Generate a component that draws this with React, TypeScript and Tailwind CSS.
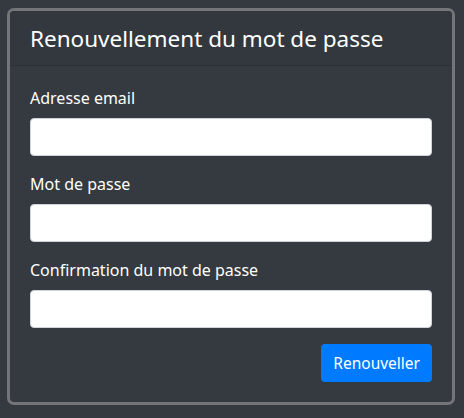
const fields = [
  { id: "email", label: "Adresse email", type: "email" },
  { id: "password", label: "Mot de passe", type: "password" },
  { id: "password_confirmation", label: "Confirmation du mot de passe", type: "password" },
];

export default function App() {
  return (
    <div className="min-h-screen bg-[#343a40] pt-[8px] pl-[7px] pr-[9px] pb-[12px] font-['Noto_Sans',sans-serif] text-white">
      <div className="rounded-[7px] border-[3px] border-[#747579] bg-[#343a40] overflow-hidden">
        <div className="flex h-[55px] items-center border-b border-[#2c3136] bg-[#32383e] px-5">
          <h4 className="text-[22.5px] leading-[1.2] font-normal">Renouvellement du mot de passe</h4>
        </div>
        <form className="p-5" onSubmit={(e) => e.preventDefault()}>
          {fields.map((f) => (
            <div key={f.id} className="mb-4">
              <label htmlFor={f.id} className="mb-2 block text-[16px] leading-6">
                {f.label}
              </label>
              <input
                id={f.id}
                type={f.type}
                className="block h-[38px] w-full rounded border border-[#ced4da] bg-white px-3 text-[16px] text-[#495057] outline-none"
              />
            </div>
          ))}
          <div className="flex justify-end">
            <button
              type="submit"
              className="h-[38px] rounded bg-[#007bff] px-3 text-[15.5px] leading-6 text-white"
            >
              Renouveller
            </button>
          </div>
        </form>
      </div>
    </div>
  );
}
